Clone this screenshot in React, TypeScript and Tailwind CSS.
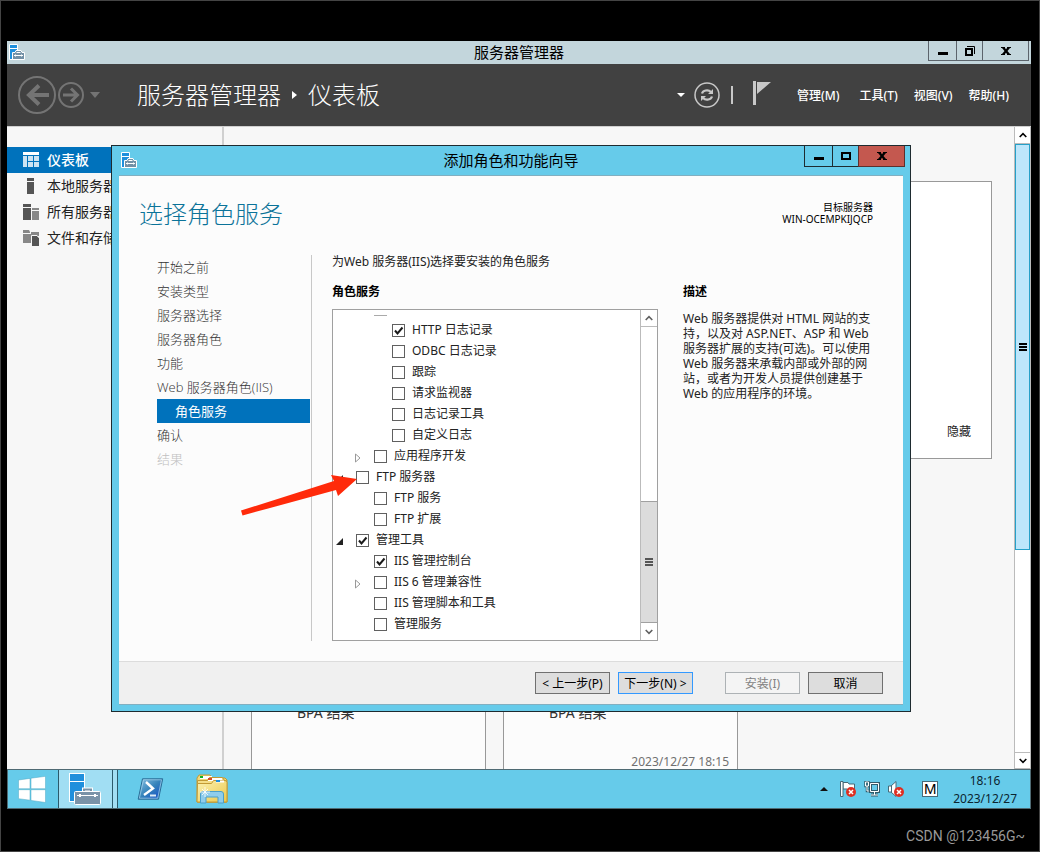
import React from "react";

interface RoleRow {
  label: string;
  level: 0 | 1 | 2;
  checked?: boolean;
  expander?: "open" | "closed";
}

const roleRows: RoleRow[] = [
  { label: "HTTP 日志记录", level: 2, checked: true },
  { label: "ODBC 日志记录", level: 2 },
  { label: "跟踪", level: 2 },
  { label: "请求监视器", level: 2 },
  { label: "日志记录工具", level: 2 },
  { label: "自定义日志", level: 2 },
  { label: "应用程序开发", level: 1, expander: "closed" },
  { label: "FTP 服务器", level: 0, expander: "open" },
  { label: "FTP 服务", level: 1 },
  { label: "FTP 扩展", level: 1 },
  { label: "管理工具", level: 0, checked: true, expander: "open" },
  { label: "IIS 管理控制台", level: 1, checked: true },
  { label: "IIS 6 管理兼容性", level: 1, expander: "closed" },
  { label: "IIS 管理脚本和工具", level: 1 },
  { label: "管理服务", level: 1 },
];

const steps = [
  "开始之前",
  "安装类型",
  "服务器选择",
  "服务器角色",
  "功能",
  "Web 服务器角色(IIS)",
  "角色服务",
  "确认",
  "结果",
];

const levelPadding = {
  0: "pl-[3px]",
  1: "pl-[21px]",
  2: "pl-[39px]",
};

const ServerIcon: React.FC<{ className: string }> = ({ className }) => (
  <svg className={className} viewBox="0 0 32 32">
    <rect x="0.5" y="0.5" width="15" height="28" fill="#1f8fdc" stroke="#fff" />
    <path d="M0 8.500h16" stroke="#fff" />
    <path d="M15 19v-2.500h7V19" fill="none" stroke="#fff" strokeWidth="4" />
    <path d="M15 19v-2.500h7V19" fill="none" stroke="#7a93a8" strokeWidth="2" />
    <rect x="5.500" y="18.500" width="26" height="13" rx="1" fill="#7a93a8" stroke="#fff" />
    <path d="M8 22.500h21M10.500 21v3M11.500 21v3M25.500 21v3M26.500 21v3" stroke="#fff" />
  </svg>
);

const SmallServerIcon: React.FC = () => (
  <svg className="size-4" viewBox="0 0 16 16">
    <path d="M.5.5h8v15h-8z" fill="#1f8fdc" stroke="#fff" />
    <path d="M0 4.500h9" stroke="#fff" />
    <path d="M3.500 8.500H6l1-2h5l1 2h2.500v7h-12z" fill="#7290a6" stroke="#fff" />
    <path d="M7.500 8.500h4M5 11.500h9M6.500 10.500v2M12.500 10.500v2" stroke="#fff" />
  </svg>
);

const MinimizeGlyph = () => (
  <svg className="h-[10px] w-[10px]" viewBox="0 0 10 10">
    <path d="M0 6h10v3H0z" />
  </svg>
);

const CloseGlyph = () => (
  <svg className="h-2 w-[10px]" viewBox="0 0 10 8">
    <path d="M0 0h4v1L5 2.200 6 1V0h4v1H9L6.500 4 9 7h1v1H6V7L5 5.800 4 7v1H0V7h1l2.500-3L1 1H0z" />
  </svg>
);

const Chevron: React.FC<{ down?: boolean; color: string }> = ({ down, color }) => (
  <svg className="h-[6px] w-2" viewBox="0 0 8 6" fill="none" stroke={color} strokeWidth="1.600">
    {down ? <path d="M.7 1 4 4.300 7.300 1" /> : <path d="M.7 5 4 1.700 7.300 5" />}
  </svg>
);

const Grip: React.FC<{ color: string }> = ({ color }) => (
  <svg className="h-2 w-2" viewBox="0 0 8 8">
    <path d="M0 0h8v2H0zM0 3h8v2H0zM0 6h8v2H0z" fill={color} />
  </svg>
);

const navItems = [
  {
    label: "仪表板",
    icon: (
      <>
        <path d="M0 0h16v3H0z" fill="#fff" />
        <path d="M0 4h4v11H0zM5 4h5v5H5zM11 4h5v5h-5zM5 10h5v5H5zM11 10h5v5h-5z" fill="#cce3f2" />
      </>
    ),
  },
  { label: "本地服务器", icon: <path d="M4 0h7v3H4zM4 4h7v12H4z" fill="#555" /> },
  {
    label: "所有服务器",
    icon: (
      <>
        <path d="M0 0h8v3H0zM0 4h8v12H0z" fill="#555" />
        <path d="M9 4h7v2H9zM9 7h7v9H9z" fill="#888" />
      </>
    ),
  },
  {
    label: "文件和存储",
    icon: (
      <>
        <path d="M0 0h6l1 2v1H0zM0 4h8v9H0zM8 2h8v4H8z" fill="#888" />
        <path d="M9 6h5l2 2v8H9z" fill="#555" />
        <path d="M8.500 16V5.500H14l2.500 2.500" fill="none" stroke="#f7f7f7" />
      </>
    ),
  },
];

const TitleBar: React.FC = () => (
  <div className="grid h-[23px] shrink-0 grid-cols-[1fr_auto_1fr] items-start bg-[#c3d6dc] px-[2px]">
    <span className="flex h-[22px] items-center">
      <SmallServerIcon />
    </span>
    <span className="text-[15px] leading-[22px]">服务器管理器</span>
    <div className="flex h-5 justify-end">
      <button aria-label="最小化" className="flex w-[29px] items-center justify-center border border-t-0 border-[#5c646c]">
        <MinimizeGlyph />
      </button>
      <button aria-label="还原" className="flex w-[25px] items-center justify-center border-b border-[#5c646c]">
        <svg className="size-[10px]" viewBox="0 0 10 10">
          <path d="M1 3h6v6H1z" fill="none" stroke="#000" strokeWidth="2" />
          <path d="M2 .5h7.500V8" fill="none" stroke="#000" />
        </svg>
      </button>
      <button aria-label="关闭" className="flex w-[47px] items-center justify-center border border-t-0 border-[#5c646c]">
        <CloseGlyph />
      </button>
    </div>
  </div>
);

const HeaderBar: React.FC = () => (
  <header className="flex h-[62px] shrink-0 items-center bg-[#414141] pr-[22px] pl-[11px] text-white">
    <button aria-label="后退">
      <svg className="size-[38px]" viewBox="0 0 38 38" fill="none" stroke="#747474">
        <circle cx="19" cy="19" r="18" strokeWidth="2" />
        <path d="M31 19H10M21 9.500 11 19l10 9.500" strokeWidth="4" />
      </svg>
    </button>
    <button aria-label="前进" className="ml-[2px]">
      <svg className="size-[26px]" viewBox="0 0 26 26" fill="none" stroke="#747474">
        <circle cx="13" cy="13" r="12" strokeWidth="2" />
        <path d="M5 13h14M13 6.500l6.500 6.500-6.500 6.500" strokeWidth="3" />
      </svg>
    </button>
    <button aria-label="历史记录" className="ml-[6px]">
      <svg className="h-[6px] w-[10px]" viewBox="0 0 10 6">
        <path d="M0 0h10L5 6z" fill="#747474" />
      </svg>
    </button>
    <h1 className="ml-[37px] flex items-center text-[24px] leading-[32px] font-light whitespace-nowrap">
      服务器管理器
      <svg className="mx-[11px] h-2 w-[5px]" viewBox="0 0 5 8">
        <path d="M0 0l5 4-5 4z" fill="#fff" />
      </svg>
      仪表板
    </h1>
    <div className="ml-auto flex items-center">
      <svg className="mr-[9px] h-1 w-2" viewBox="0 0 8 4">
        <path d="M0 0h8L4 4z" fill="#fff" />
      </svg>
      <button aria-label="刷新">
        <svg className="size-[26px]" viewBox="0 0 26 26" fill="none" stroke="#c8c8c8">
          <circle cx="13" cy="13" r="12" strokeWidth="1.500" />
          <path d="M8 11.500c.8-3 6-4.500 9-1.500M18 14.500c-.8 3-6 4.500-9 1.500" strokeWidth="2.200" />
          <path d="M19 7v5h-5zM7 19v-5h5z" fill="#c8c8c8" stroke="none" />
        </svg>
      </button>
      <span className="ml-[11px] h-[18px] w-[2px] bg-[#c8c8c8]" />
      <button aria-label="通知" className="mr-[26px] mb-1 ml-5">
        <svg className="h-6 w-[18px]" viewBox="0 0 18 24" fill="#c8c8c8">
          <path d="M0 0h3v24H0zM4 1h14L4 13z" />
        </svg>
      </button>
      <nav className="flex gap-4 pt-[2px] text-[12px] leading-[16px] font-medium whitespace-nowrap">
        <button className="mr-1">管理(M)</button>
        <button>工具(T)</button>
        <button>视图(V)</button>
        <button>帮助(H)</button>
      </nav>
    </div>
  </header>
);

const Sidebar: React.FC = () => (
  <nav className="w-[217px] shrink-0 border-r-2 border-[#d0d0d0] pt-5">
    {navItems.map((item, index) => (
      <a
        key={item.label}
        href="#"
        className={
          index === 0
            ? "flex h-[26px] items-center gap-2 bg-[#0072bc] pl-4 text-[14px] leading-[20px] font-medium text-white"
            : "flex h-[26px] items-center gap-2 pl-4 text-[14px] leading-[20px] text-[#222]"
        }
      >
        <svg className="size-4" viewBox="0 0 16 16">
          {item.icon}
        </svg>
        {item.label}
      </a>
    ))}
  </nav>
);

const Dashboard: React.FC = () => (
  <main className="flex min-w-0 flex-1 flex-col pt-[54px] pr-[22px] pl-[27px]">
    <section className="flex h-[278px] shrink-0 items-end justify-end border border-[#999] bg-white pr-5 pb-[18px]">
      <a href="#" className="text-[12px] leading-[16px] text-[#222]">
        隐藏
      </a>
    </section>
    <div className="mt-10 flex flex-1 gap-[17px] text-[#333]">
      {["", "2023/12/27 18:15"].map((date, index) => (
        <section key={index} className="flex w-[235px] flex-col justify-end border border-b-0 border-[#999] bg-[#fcfcfc]">
          <p className="mb-8 pl-[45px] text-[14px] leading-[20px]">BPA 结果</p>
          <p className="h-[14px] pr-2 text-right text-[12px] leading-[14px] text-[#707070]">{date}</p>
        </section>
      ))}
    </div>
  </main>
);

const PageScrollbar: React.FC = () => (
  <div className="flex w-[17px] shrink-0 flex-col border-x border-[#bbb] bg-white">
    <span className="flex h-[17px] items-center justify-center border-b border-[#bbb]">
      <Chevron color="#000" />
    </span>
    <span className="flex h-[406px] items-center justify-center border border-[#26a0c8] bg-[#bde6fb]">
      <Grip color="#000" />
    </span>
    <span className="mt-auto flex h-[17px] items-center justify-center border-y border-[#bbb]">
      <Chevron down color="#000" />
    </span>
  </div>
);

const RoleItem: React.FC<{ row: RoleRow }> = ({ row }) => (
  <li className={`flex h-[21px] items-center ${levelPadding[row.level]}`}>
    <span className="flex w-5 items-center pt-[2px]">
      {row.expander === "open" && (
        <svg className="h-[7px] w-[7px]" viewBox="0 0 7 7">
          <path d="M7 0v7H0z" fill="#222" />
        </svg>
      )}
      {row.expander === "closed" && (
        <svg className="ml-px h-[10px] w-[6px]" viewBox="0 0 6 10">
          <path d="M.5 1l4.500 4L.5 9z" fill="#fff" stroke="#999" />
        </svg>
      )}
    </span>
    <label className="flex items-center gap-[7px]">
      <span className="grid">
        <input
          type="checkbox"
          defaultChecked={row.checked}
          className="peer col-start-1 row-start-1 size-[13px] appearance-none border border-[#606060] bg-white"
        />
        <svg className="invisible col-start-1 row-start-1 size-[13px] peer-checked:visible" viewBox="0 0 13 13">
          <path d="M3 6.500 5.500 9.500 10.500 3.500" fill="none" stroke="#1a1a1a" strokeWidth="2" />
        </svg>
      </span>
      <span className="pb-[2px]">{row.label}</span>
    </label>
  </li>
);

const RoleList: React.FC = () => (
  <div className="flex h-[332px] border border-[#a0a0a0] bg-white">
    <ul className="flex-1 text-[12px] leading-[16px] text-[#222]">
      <li aria-hidden="true" className="mb-1 ml-[41px] h-[6px] w-[13px] border-b border-[#aaa]" />
      {roleRows.map((row) => (
        <RoleItem key={row.label} row={row} />
      ))}
    </ul>
    <div className="flex w-[17px] flex-col border-l border-[#bbb]">
      <span className="flex h-[17px] items-center justify-center border-b border-[#bbb]">
        <Chevron color="#606060" />
      </span>
      <span className="mt-auto flex h-[122px] items-center justify-center border-y border-[#a0a0a0] bg-[#dcdcdc]">
        <Grip color="#555" />
      </span>
      <span className="flex h-[17px] items-center justify-center">
        <Chevron down color="#606060" />
      </span>
    </div>
  </div>
);

const Steps: React.FC = () => (
  <ol className="mr-px w-[153px] font-['Open_Sans','Noto_Sans_CJK_SC',sans-serif] text-[13px] leading-[24px] font-light text-[#333]">
    {steps.map((step, index) => (
      <li
        key={step}
        className={
          index === 6 ? "bg-[#0072bc] pl-[18px] font-normal text-white" : index === 8 ? "text-[#c0c0c0]" : ""
        }
      >
        {step}
      </li>
    ))}
  </ol>
);

const Wizard: React.FC = () => (
  <div
    role="dialog"
    aria-labelledby="wizard-title"
    className="absolute top-[104px] left-[104px] flex h-[567px] w-[800px] flex-col border border-[#1e2b30] bg-[#66cbea] px-[7px] pb-[7px]"
  >
    <div className="grid h-[29px] shrink-0 grid-cols-[1fr_auto_1fr] items-start">
      <span className="flex h-[27px] items-center pl-[2px]">
        <SmallServerIcon />
      </span>
      <h2 id="wizard-title" className="text-[15px] leading-[28px]">
        添加角色和功能向导
      </h2>
      <div className="-mr-[2px] flex h-[21px] justify-end">
        <button aria-label="最小化" className="flex w-[29px] items-center justify-center border border-t-0 border-[#1e2b30]">
          <MinimizeGlyph />
        </button>
        <button aria-label="最大化" className="flex w-[25px] items-center justify-center border-b border-[#1e2b30]">
          <svg className="h-2 w-[10px]" viewBox="0 0 10 8">
            <path d="M1 1h8v6H1z" fill="none" stroke="#000" strokeWidth="2" />
          </svg>
        </button>
        <button
          aria-label="关闭"
          className="flex w-[47px] items-center justify-center border border-t-0 border-[#5e2f2c] bg-[#c4584f]"
        >
          <CloseGlyph />
        </button>
      </div>
    </div>

    <div className="flex flex-1 flex-col border-y border-[#82afc0] bg-[#fcfcfc]">
      <div className="flex h-[79px] shrink-0 justify-between pr-[30px] pl-5">
        <h3 className="pt-[22px] text-[24px] leading-[32px] font-light text-[#0b7399]">选择角色服务</h3>
        <p className="pt-[25px] text-right text-[10px] leading-[12px]">
          目标服务器
          <br />
          WIN-OCEMPKIJQCP
        </p>
      </div>

      <div className="flex flex-1 pl-[38px]">
        <Steps />
        <div className="border-l border-[#c8c8c8] pl-5">
          <p className="text-[12px] leading-[14px] text-[#222]">为Web 服务器(IIS)选择要安装的角色服务</p>
          <h4 className="mt-4 mb-[10px] text-[12px] leading-[14px] font-bold">角色服务</h4>
          <div className="w-[326px]">
            <RoleList />
          </div>
        </div>
        <div className="pt-[30px] pl-[25px] text-[12px] text-[#222]">
          <h4 className="mb-3 leading-[14px] font-bold text-black">描述</h4>
          <p className="leading-[15px] whitespace-nowrap">
            Web 服务器提供对 HTML 网站的支
            <br />
            持，以及对 ASP.NET、ASP 和 Web
            <br />
            服务器扩展的支持(可选)。可以使用
            <br />
            Web 服务器来承载内部或外部的网
            <br />
            站，或者为开发人员提供创建基于
            <br />
            Web 的应用程序的环境。
          </p>
        </div>
      </div>

      <div className="mt-5 flex h-[43px] shrink-0 items-center justify-end gap-2 border-t border-[#dcdcdc] bg-[#f0f0f0] pr-5 text-[12px] leading-[16px] whitespace-nowrap">
        <button className="h-[22px] w-[75px] border border-[#707070] bg-[#dddddd] pt-px">&lt; 上一步(P)</button>
        <button className="mr-6 h-[22px] w-[75px] border border-[#3399ff] bg-[#dddddd] pt-px">下一步(N) &gt;</button>
        <button disabled className="h-[22px] w-[75px] border border-[#adb2b5] bg-[#f4f4f4] pt-px text-[#838383]">
          安装(I)
        </button>
        <button className="h-[22px] w-[75px] border border-[#707070] bg-[#dddddd] pt-px">取消</button>
      </div>
    </div>

    {/* annotation arrow pointing at the FTP row */}
    <svg className="pointer-events-none absolute top-[326px] left-[128px] h-12 w-[120px]" viewBox="0 0 120 48">
      <path d="M117 7 91 3l3 6L1 38.500l1.500 5L96 18l2 6z" fill="#ff2a0a" />
    </svg>
  </div>
);

const ErrorBadge = () => (
  <>
    <circle cx="11" cy="11" r="5" fill="#dd2f22" />
    <path d="M9 9l4 4M13 9l-4 4" stroke="#fff" strokeWidth="1.500" />
  </>
);

const Taskbar: React.FC = () => (
  <footer className="flex h-10 shrink-0 items-stretch border border-[#4f6a73] bg-[#66cbea]">
    <button aria-label="开始" className="flex w-[50px] items-center justify-center pr-[2px]">
      <svg className="h-[27px] w-7" viewBox="0 0 28 27" fill="#fff" stroke="#4fa9c4" strokeWidth="0.500">
        <path d="M.5 4 12 2.400v10.300H.5zM13 2.200 27.500.3v12.400H13zM.5 13.700H12v10.500L.5 22.700zM13 13.700h14.500v12.800L13 24.400z" />
      </svg>
    </button>
    <button
      aria-label="服务器管理器"
      className="flex w-[55px] items-center justify-center border-x border-[#2b5a6b] bg-[#a1def3] pr-px"
    >
      <ServerIcon className="size-8" />
    </button>
    <span className="w-[5px] border-r border-[#2b5a6b] bg-[#a1def3]" />
    <button aria-label="PowerShell" className="ml-[19px] flex w-[27px] items-center">
      <svg className="h-[22px] w-[27px]" viewBox="0 0 27 22">
        <defs>
          <linearGradient id="ps" x1="0" y1="0" x2="1" y2="1">
            <stop offset="0" stopColor="#8cc4e4" />
            <stop offset="0.500" stopColor="#3583ba" />
            <stop offset="0.800" stopColor="#1f5fc4" />
            <stop offset="1" stopColor="#3c8fd0" />
          </linearGradient>
        </defs>
        <path d="M5.500.8h20.200L21.500 21.200H1.200z" fill="url(#ps)" stroke="#2a6e97" strokeLinejoin="round" />
        <path d="M6.500 1.800h18L20.700 20.200H2.400z" fill="none" stroke="#a9d5ec" strokeWidth="0.700" />
        <path d="M9 4l7 6.500L7 17" fill="none" stroke="#fff" strokeWidth="2.400" />
        <path d="M13 17.500h6" stroke="#dcebf5" strokeWidth="2" />
      </svg>
    </button>
    <button aria-label="文件资源管理器" className="ml-8 flex items-center">
      <svg className="h-[30px] w-8" viewBox="0 0 32 30">
        <defs>
          <linearGradient id="folder" x1="0" y1="0" x2="1" y2="1">
            <stop offset="0" stopColor="#fbf2b4" />
            <stop offset="1" stopColor="#ecc84c" />
          </linearGradient>
        </defs>
        <path d="M1 4l2-3h11l2 3h13l2 2v22H1z" fill="#f3d978" stroke="#c39a35" />
        <path d="M4 2h12v3H4z" fill="#fff" />
        <path d="M4 2h3v2H4z" fill="#12b322" />
        <path d="M1.500 6.500h10l2-3h13l2 3h2V28h-29z" fill="#f5de86" stroke="#c39a35" />
        <path d="M12 4h14v3H12z" fill="#fff" />
        <path d="M12 4h4v2h-4z" fill="#d94a28" />
        <path d="M1.500 9.500h14l2-3h12l1.500 2V28h-30z" fill="url(#folder)" stroke="#c39a35" />
        <path d="M20 6.500h8v2h-8z" fill="#fff" />
        <path d="M20 6h4v2h-4z" fill="#1f8fe0" />
        <path d="M4.500 29V20q0-2.500 2.500-2.500h18q2.500 0 2.500 2.500v9H22v-6H10v6z" fill="#8fcdec" stroke="#4b9fc9" />
        <path d="M9 13v10M4 18h10M6 15l6 6M12 15l-6 6" stroke="#fff" strokeWidth="0.800" />
      </svg>
    </button>

    <div className="ml-auto flex items-center pr-3">
      <svg className="mr-3 h-1 w-2" viewBox="0 0 8 4">
        <path d="M4 0l4 4H0z" fill="#111" />
      </svg>
      <svg className="mr-2 size-4" viewBox="0 0 16 16">
        <path d="M3 1.500h5l1 1.500h5.500v6H8L7 8H3z" fill="#fff" stroke="#476a78" />
        <path d="M.5.5H3v15H.5z" fill="#fff" stroke="#476a78" />
        <ErrorBadge />
      </svg>
      <svg className="mr-2 size-4" viewBox="0 0 16 16" fill="none">
        <path d="M6.500 2.500h8v8h-8z" fill="#66cbea" stroke="#315b6b" strokeWidth="3" />
        <path d="M6.500 2.500h8v8h-8z" stroke="#fff" />
        <path d="M10.500 11v3M7 14h7" stroke="#315b6b" strokeWidth="3" />
        <path d="M10.500 11v3M7 14h7" stroke="#fff" />
        <path d="M1.500 1h3v4h-3zM3 5v5h2" fill="#66cbea" stroke="#315b6b" strokeWidth="2.500" />
        <path d="M1.500 1h3v4h-3zM3 5v5h2" stroke="#fff" />
      </svg>
      <svg className="mr-[18px] size-4" viewBox="0 0 16 16">
        <path d="M.5 5H3l5-4.500v15L3 11H.5z" fill="#fff" stroke="#476a78" />
        <path d="M3.500 5v6" stroke="#476a78" />
        <ErrorBadge />
      </svg>
      <span className="mr-[15px] flex size-4 items-center justify-center border border-[#476a78] bg-white font-['Liberation_Sans',sans-serif] text-[15px] leading-[16px]">
        M
      </span>
      <div className="pt-[2px] pr-px text-center text-[12px] leading-[18px] text-[#0c2530]">
        18:16
        <br />
        2023/12/27
      </div>
    </div>
  </footer>
);

export default function App() {
  return (
    <div className="flex min-h-screen flex-col border border-[#444] bg-black px-[6px] pt-10 font-['Noto_Sans','Noto_Sans_CJK_SC',sans-serif] text-black">
      <div className="relative mr-[2px] flex flex-1 flex-col">
        <TitleBar />
        <HeaderBar />
        <div className="flex min-h-[640px] flex-1 overflow-hidden border-t border-[#d0d0d0] bg-[#f7f7f7]">
          <Sidebar />
          <Dashboard />
          <PageScrollbar />
        </div>
        <Taskbar />
        <Wizard />
      </div>
      <p className="pt-[17px] pr-2 pb-[5px] text-right font-['Roboto',sans-serif] text-[14px] leading-[20px] text-[#999]">
        CSDN @123456G~
      </p>
    </div>
  );
}
